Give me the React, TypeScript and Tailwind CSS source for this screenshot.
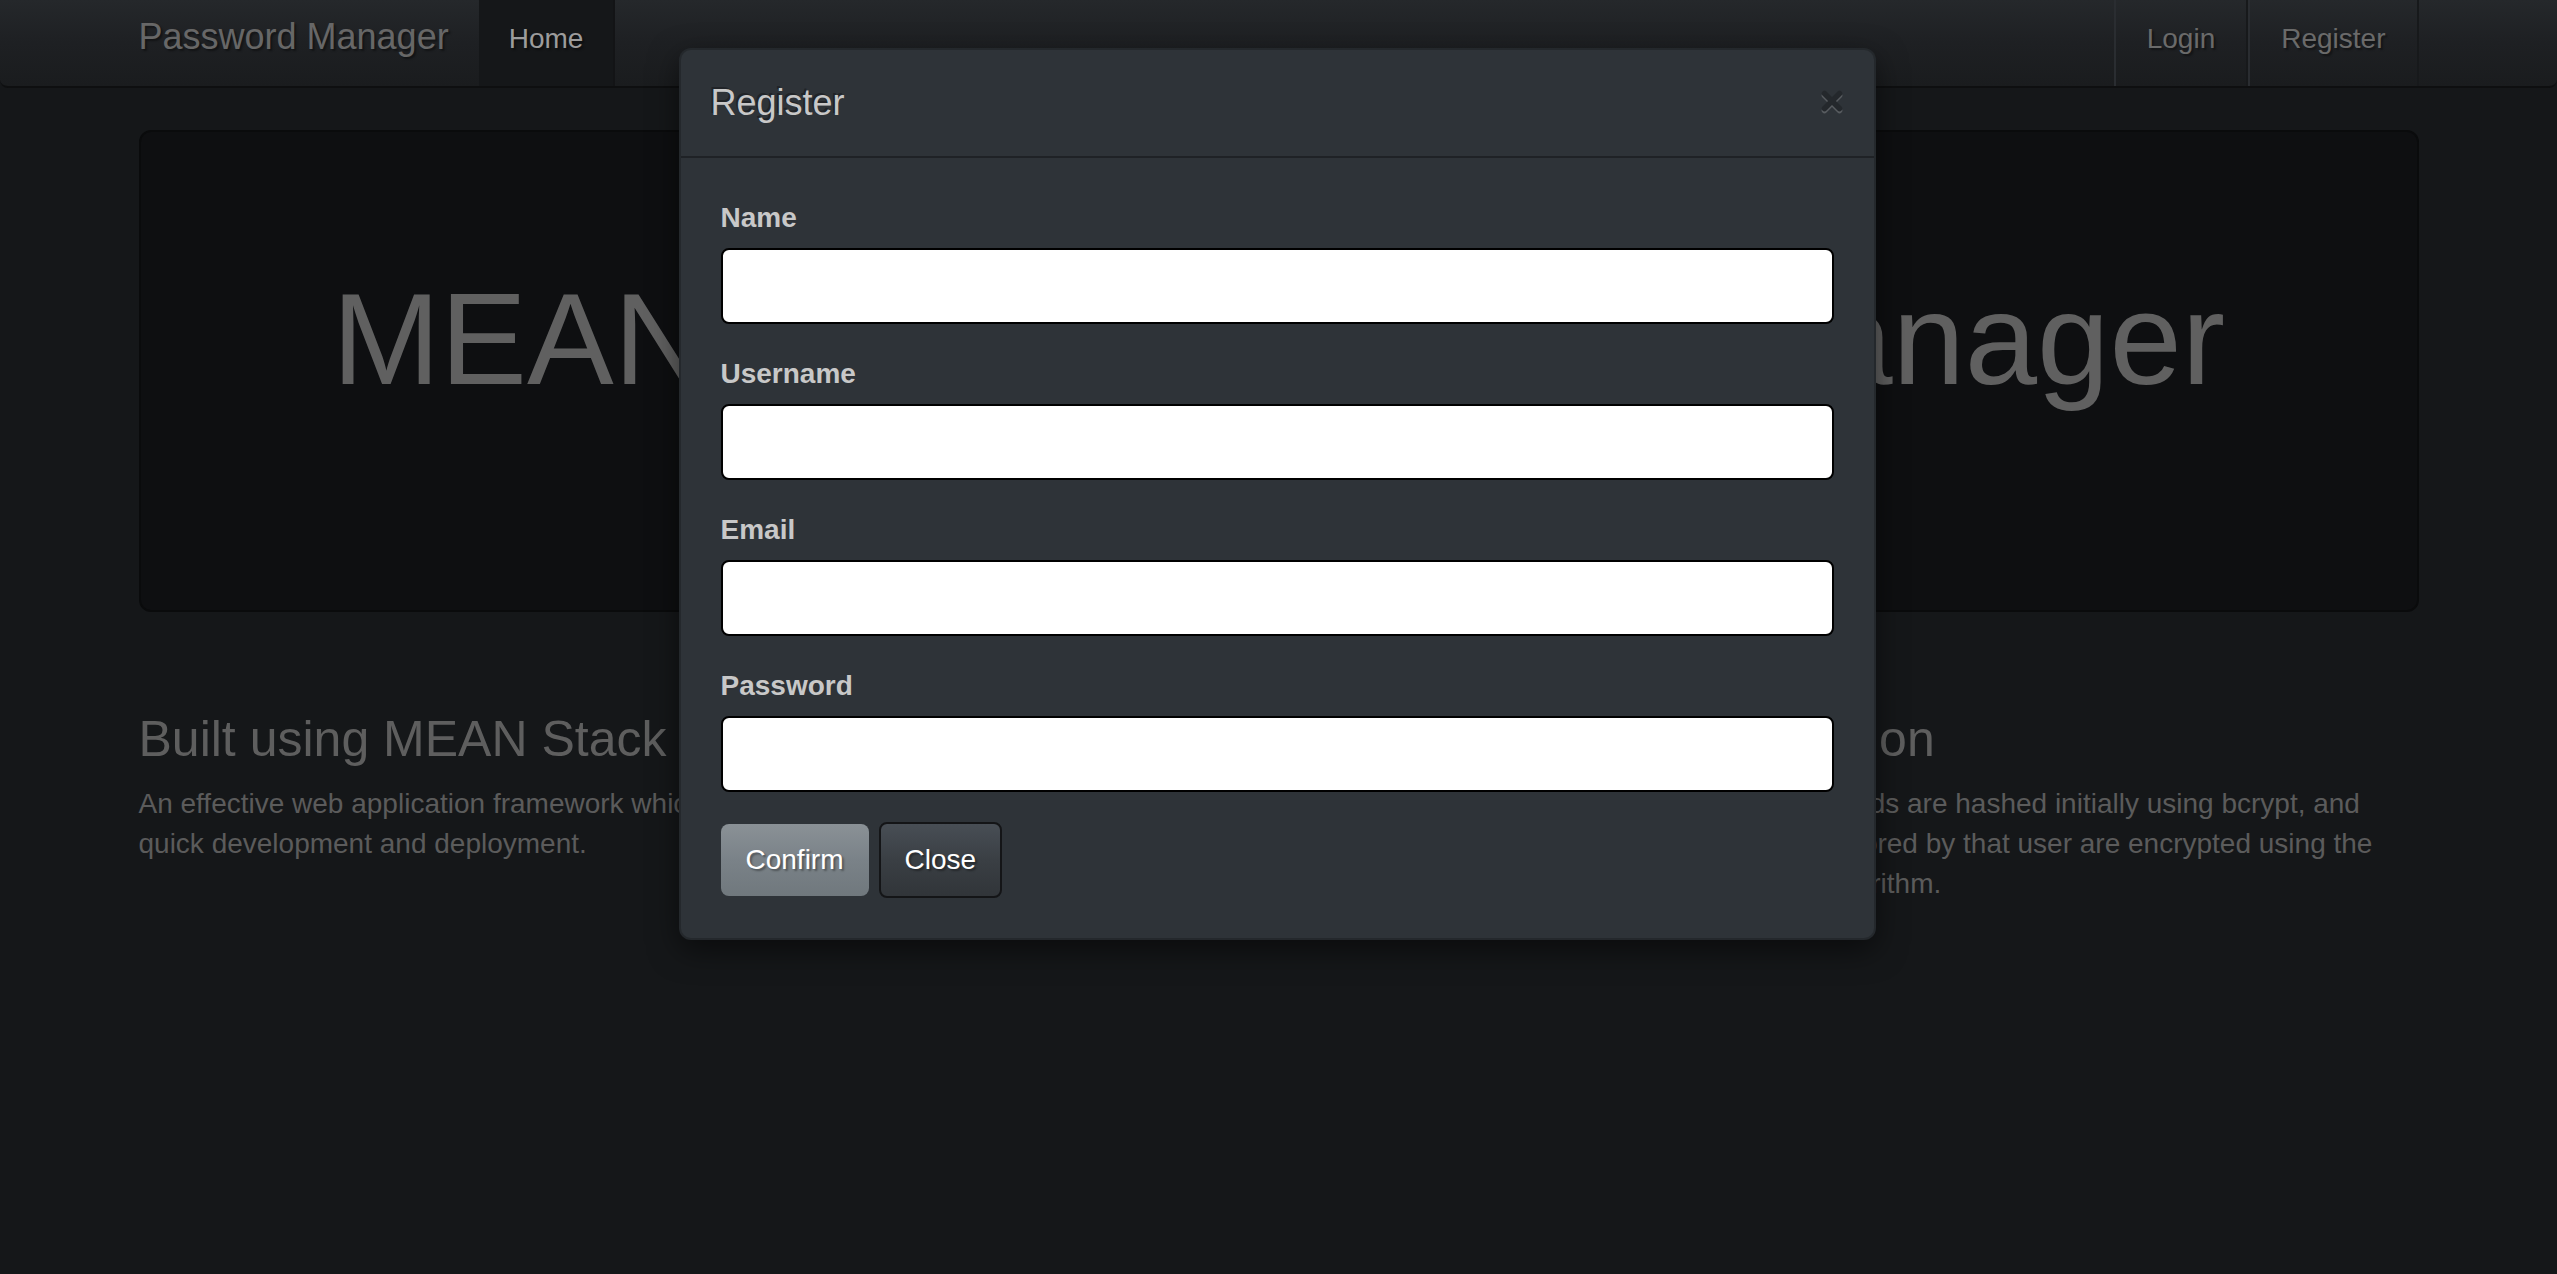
import { X } from "lucide-react";

const fields = ["Name", "Username", "Email", "Password"];

const features = [
  {
    title: "Built using MEAN Stack",
    body: "An effective web application framework which allows for quick development and deployment.",
  },
  {
    title: "Secure Storage",
    body: "Every saved entry is kept in MongoDB and is only available to the account that created it.",
  },
  {
    title: "Encryption",
    body: "User passwords are hashed initially using bcrypt, and passwords stored by that user are encrypted using the AES-256 algorithm.",
  },
];

const Navbar = () => (
  <nav className="h-[88px] w-full rounded-b-[8px] border-b-2 border-[#0e0f10] bg-gradient-to-b from-[#25282b] via-[#1e2023] to-[#1a1c1e]">
    <div className="mx-auto flex h-[86px] w-[2280px] items-start">
      <a className="pt-[17px] pr-[30px] text-[36px] leading-[40px] text-[#676767] [text-shadow:2px_2px_2px_rgba(0,0,0,0.4)]">
        Password Manager
      </a>
      <a className="h-[86px] border-r-2 border-[#131416] bg-[#151719] px-[30px] pt-[19px] text-[28px] leading-[40px] text-[#9c9c9c] [text-shadow:2px_2px_2px_rgba(0,0,0,0.4)]">
        Home
      </a>
      <div className="ml-auto flex">
        {["Login", "Register"].map((item) => (
          <a
            key={item}
            className="h-[86px] border-l-2 border-r-2 border-l-[#2a2d31] border-r-[#17191b] px-[31px] pt-[19px] text-[28px] leading-[40px] text-[#6a6a6a] [text-shadow:2px_2px_2px_rgba(0,0,0,0.4)]"
          >
            {item}
          </a>
        ))}
      </div>
    </div>
  </nav>
);

const RegisterModal = () => (
  <div className="absolute inset-0 flex justify-center pt-[48px] pr-[3px]">
    <div className="h-fit w-[1197px] rounded-[12px] border-2 border-black/20 bg-[#2e3338] shadow-[0_10px_30px_rgba(0,0,0,0.5)]">
      <div className="flex items-start justify-between border-b-2 border-[#1f2226] px-[30px] pt-[33px] pb-[33px]">
        <h4 className="text-[36px] leading-[40px] text-[#c8c8c8] [text-shadow:-2px_-2px_0_rgba(0,0,0,0.3)]">Register</h4>
        <button className="mt-[3px] mr-[-3px] text-black opacity-20 [filter:drop-shadow(0_2px_0_#fff)]">
          <X className="h-[30px] w-[30px]" strokeWidth={4.5} />
        </button>
      </div>
      <div className="p-[40px]">
        {fields.map((field) => (
          <div key={field} className="mb-[30px]">
            <label className="mb-[10px] block text-[28px] font-bold leading-[40px] text-[#c8c8c8]">
              {field}
            </label>
            <input
              type={field === "Password" ? "password" : "text"}
              className="block h-[76px] w-full rounded-[8px] border-2 border-black bg-white px-[24px] text-[28px] text-[#272b30] outline-none"
            />
          </div>
        ))}
        <div className="flex items-center gap-[10px]">
          <button className="h-[72px] rounded-[8px] bg-gradient-to-b from-[#8a9196] via-[#7a8288] to-[#70787d] px-[25px] text-[28px] text-white [text-shadow:2px_2px_2px_rgba(0,0,0,0.35)]">
            Confirm
          </button>
          <button className="h-[76px] rounded-[8px] border-2 border-[#141517] bg-gradient-to-b from-[#484e55] via-[#3a3f44] to-[#313539] px-[24px] text-[28px] text-white [text-shadow:2px_2px_2px_rgba(0,0,0,0.35)]">
            Close
          </button>
        </div>
      </div>
    </div>
  </div>
);

const App = () => {
  return (
    <div className="relative min-h-screen w-full bg-[#151719] font-['Liberation_Sans',Arial,sans-serif]">
      <Navbar />

      <div className="mx-auto w-[2280px]">
        {/* Jumbotron */}
        <div className="mt-[42px] box-border h-[482px] rounded-[12px] border-2 border-[#0a0b0c] bg-[#0e0f11] pt-[136px]">
          <h1 className="text-center text-[130px] leading-[1.1] text-[#606060]">
            MEAN Stack Password Manager
          </h1>
        </div>

        {/* Features */}
        <div className="mt-[100px] grid grid-cols-3 gap-[60px]">
          {features.map((f) => (
            <div key={f.title}>
              <h2 className="mb-[17px] text-[50px] leading-[1.1] text-[#5e5e5e]">{f.title}</h2>
              <p className="text-[28px] leading-[40px] text-[#5b5b5b]">{f.body}</p>
            </div>
          ))}
        </div>
      </div>

      <RegisterModal />
    </div>
  );
};

export default App;
